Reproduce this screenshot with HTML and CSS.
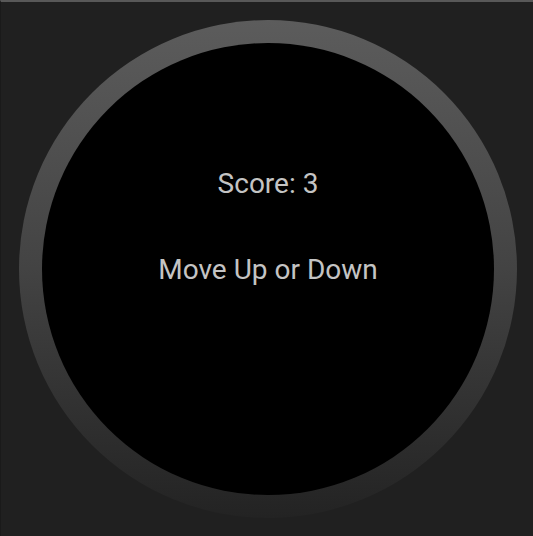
FILE: index.html
```html
<!DOCTYPE html>
<html>
<head>
<meta charset="utf-8">
<link rel="stylesheet" href="styles.css">
</head>
<body>
<div class="screen">
  <div class="watch">
    <div class="face">
      <div class="score">Score: 3</div>
      <div class="prompt">Move Up or Down</div>
    </div>
  </div>
</div>
</body>
</html>
```
FILE: styles.css
```css
html, body {
  margin: 0;
  padding: 0;
  background: #202020;
}
.screen {
  box-sizing: border-box;
  width: 533px;
  height: 536px;
  overflow: hidden;
  background: #202020;
  border-top: 2px solid #585858;
  border-left: 1px solid #1a1a1a;
  padding: 18px 0 0 18px;
  font-family: Roboto, "Noto Sans", sans-serif;
}
.watch {
  box-sizing: border-box;
  width: 498px;
  height: 498px;
  border-radius: 50%;
  padding: 23px;
  background: linear-gradient(to bottom, #5c5c5c 0%, #434343 50%, #232323 100%);
}
.face {
  box-sizing: border-box;
  width: 452px;
  height: 452px;
  border-radius: 50%;
  background: #000;
  display: flex;
  flex-direction: column;
  align-items: center;
  padding-top: 124px;
  gap: 53px;
  color: #c4c4c4;
  font-size: 28px;
  line-height: 33px;
}
.score, .prompt {
  white-space: nowrap;
}
```
